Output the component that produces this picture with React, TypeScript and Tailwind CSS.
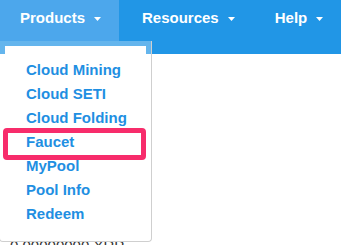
import React from 'react';

const Caret = () => (
  <svg width="7" height="4" viewBox="0 0 7 4" className="ml-[9px] mt-[1px]">
    <path d="M0 0 L7 0 L3.5 4 Z" fill="#ffffff" />
  </svg>
);

const menuItems = ['Cloud Mining', 'Cloud SETI', 'Cloud Folding', 'Faucet', 'MyPool', 'Pool Info', 'Redeem'];

export default function App() {
  return (
    <div
      className="relative w-[341px] h-[245px] overflow-hidden bg-white"
      style={{ fontFamily: '"Liberation Sans", Arial, Helvetica, sans-serif' }}
    >
      <nav className="h-[54px] bg-[#2196e6] flex items-start text-white text-[15px] font-bold leading-[20px]">
        <div className="w-[119px] h-[41px] bg-[#4ca7ec] flex items-start pt-[8px] pl-[20px]">
          <span>Products</span>
          <span className="h-[20px] flex items-center"><Caret /></span>
        </div>
        <div className="h-[41px] flex items-start pt-[8px] pl-[23px] pr-[20px]">
          <span>Resources</span>
          <span className="h-[20px] flex items-center"><Caret /></span>
        </div>
        <div className="h-[41px] flex items-start pt-[8px] pl-[20px]">
          <span>Help</span>
          <span className="h-[20px] flex items-center"><Caret /></span>
        </div>
      </nav>

      <div className="pt-[182px] pl-[10px] text-[15px] leading-[20px] text-[#333]">0.00000000 XRP</div>

      {/* dropdown */}
      <div className="absolute left-[-1px] top-[41px] w-[153px] h-[201px] border-x border-b border-[#cfcfcf] rounded-b-[4px] overflow-hidden">
        <div className="h-full border-x-[5px] border-t-[5px] border-white/30 bg-white bg-clip-padding">
          <ul className="pt-[12px] pl-[21px] text-[15px] font-bold leading-[24px] text-[#1f8fe2]">
            {menuItems.map(item => (
              <li key={item}>{item}</li>
            ))}
          </ul>
        </div>
      </div>

      {/* highlight */}
      <div className="absolute left-[3px] top-[128px] w-[143px] h-[32px] border-[5px] border-[#f72c6b] rounded-[4px]" />
    </div>
  );
}
